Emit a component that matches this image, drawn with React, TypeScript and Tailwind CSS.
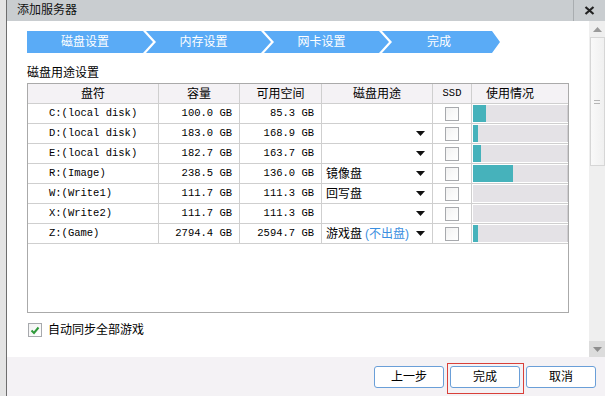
import React from 'react'

type Row = {
  drive: string
  cap: string
  free: string
  use: string
  note?: string
  drop: boolean
  bar: number
}

const ROWS: Row[] = [
  { drive: 'C:(local disk)', cap: '100.0 GB', free: '85.3 GB', use: '', drop: false, bar: 13 },
  { drive: 'D:(local disk)', cap: '183.0 GB', free: '168.9 GB', use: '', drop: true, bar: 5 },
  { drive: 'E:(local disk)', cap: '182.7 GB', free: '163.7 GB', use: '', drop: true, bar: 8 },
  { drive: 'R:(Image)', cap: '238.5 GB', free: '136.0 GB', use: '镜像盘', drop: true, bar: 40 },
  { drive: 'W:(Write1)', cap: '111.7 GB', free: '111.3 GB', use: '回写盘', drop: true, bar: 0 },
  { drive: 'X:(Write2)', cap: '111.7 GB', free: '111.3 GB', use: '', drop: true, bar: 0 },
  { drive: 'Z:(Game)', cap: '2794.4 GB', free: '2594.7 GB', use: '游戏盘', note: '(不出盘)', drop: true, bar: 5 }
]

const STEPS = ['磁盘设置', '内存设置', '网卡设置', '完成']

const mono = "font-['Liberation_Mono','Noto_Sans_CJK_SC',monospace] text-[10.5px]"

function Caret() {
  return (
    <svg width="9" height="5" viewBox="0 0 9 5" className="shrink-0">
      <polygon points="0,0 9,0 4.5,5" fill="#111" />
    </svg>
  )
}

function Box({ checked = false }: { checked?: boolean }) {
  return (
    <span className="flex h-[14px] w-[14px] items-center justify-center border border-[#a7a9ad] bg-gradient-to-br from-[#f2f2f2] to-white">
      {checked && (
        <svg width="10" height="9" viewBox="0 0 10 9">
          <path d="M1.5 4.5 L4 7 L8.5 1.5" stroke="#2f9a3a" strokeWidth="2" fill="none" />
        </svg>
      )}
    </span>
  )
}

function Steps() {
  return (
    <div className="flex h-[22px] text-[12px] leading-[22px] text-white">
      {STEPS.map((s, i) => (
        <div
          key={s}
          className={
            i === 0
              ? 'flex h-full w-[126px] items-center justify-center bg-[#5aabf6] pr-[10px] [clip-path:polygon(0_0,116px_0,100%_50%,116px_100%,0_100%)]'
              : i === 3
                ? 'ml-[-7px] flex h-full w-[118px] items-center justify-center bg-[#5aabf6] pr-[4px] [clip-path:polygon(0_0,110px_0,100%_50%,110px_100%,0_100%,10px_50%)]'
                : 'ml-[-7px] flex h-full w-[125px] items-center justify-center bg-[#5aabf6] pr-[10px] [clip-path:polygon(0_0,115px_0,100%_50%,115px_100%,0_100%,10px_50%)]'
          }
        >
          {s}
        </div>
      ))}
    </div>
  )
}

function DiskTable() {
  const cell = 'flex items-center border-r border-[#cfcfcf]'
  return (
    <div className="h-[230px] w-[542px] border border-[#aaaaaa] bg-white">
      <div className="grid grid-cols-[131px_81px_82px_111px_39px_96px] auto-rows-[20px] text-[12px] text-black">
        <div className={`${cell} justify-center border-b bg-[#f4f2f5]`}>盘符</div>
        <div className={`${cell} justify-center border-b bg-[#f4f2f5]`}>容量</div>
        <div className={`${cell} justify-center border-b bg-[#f4f2f5]`}>可用空间</div>
        <div className={`${cell} justify-center border-b bg-[#f4f2f5]`}>磁盘用途</div>
        <div className={`${cell} justify-center border-b bg-[#f4f2f5] ${mono}`}>SSD</div>
        <div className="flex items-center justify-center border-b border-[#cfcfcf] bg-[#f4f2f5] pr-[20px]">使用情况</div>
        {ROWS.map((r) => (
          <React.Fragment key={r.drive}>
            <div className={`${cell} border-b pl-[21px] ${mono}`}>{r.drive}</div>
            <div className={`${cell} justify-end border-b pr-[7px] ${mono}`}>{r.cap}</div>
            <div className={`${cell} justify-end border-b pr-[7px] ${mono}`}>{r.free}</div>
            <div className={`${cell} justify-between border-b pl-[4px] pr-[7px]`}>
              <span>
                {r.use}
                {r.note && <span className="ml-[3px] text-[#3b8fe0]">{r.note}</span>}
              </span>
              {r.drop && <Caret />}
            </div>
            <div className={`${cell} justify-center border-b`}>
              <Box />
            </div>
            <div className="flex items-center border-b border-[#cfcfcf] pl-[1px]">
              <div className="flex h-[17px] w-[95px] border-r border-[#cfcdd1] bg-[#e4e2e6]">
                <div className="h-full bg-[#46b2bb]" style={{ width: r.bar }} />
              </div>
            </div>
          </React.Fragment>
        ))}
      </div>
    </div>
  )
}

function Scrollbar() {
  return (
    <div className="flex w-[16px] flex-col items-center bg-[#efefef]">
      <svg width="9" height="5" viewBox="0 0 9 5" className="mt-[6px]">
        <polygon points="4.5,0 9,5 0,5" fill="#9a9a9a" />
      </svg>
      <div className="mt-[5px] flex h-[129px] w-[15px] items-center justify-center border border-[#d6d6d6] bg-gradient-to-r from-[#f9f9f9] to-[#f0f0f0]">
        <div className="flex flex-col gap-[2px]">
          <span className="h-px w-[6px] bg-[#b5b5b5]" />
          <span className="h-px w-[6px] bg-[#b5b5b5]" />
        </div>
      </div>
      <div className="flex-1" />
      <div className="flex h-[16px] w-full items-center justify-center bg-[#dcdcdc]">
        <svg width="9" height="5" viewBox="0 0 9 5">
          <polygon points="0,0 9,0 4.5,5" fill="#8e8e8e" />
        </svg>
      </div>
    </div>
  )
}

export default function App() {
  return (
    <div className="flex h-[396px] w-[605px] overflow-hidden bg-white font-['Liberation_Sans','Noto_Sans_CJK_SC',sans-serif] text-[12px] text-black">
      <div className="w-[7px] border-r border-[#6e6e6e] bg-[#e4e4e4]" />
      <div className="flex flex-1 flex-col">
        <div className="flex h-[21px] items-center bg-[#c9cdd0]">
          <span className="flex-1 pl-[10px] text-[12px] leading-[21px] text-[#111]">添加服务器</span>
          <div className="flex h-full w-[32px] items-center justify-center border-l border-[#a9adb0]">
            <svg width="11" height="9" viewBox="0 0 11 9">
              <path d="M1.5 1 L9.5 8 M9.5 1 L1.5 8" stroke="#222" strokeWidth="2.2" />
            </svg>
          </div>
        </div>
        <div className="flex flex-1">
          <div className="flex flex-1 flex-col pl-[20px] pt-[10px]">
            <Steps />
            <div className="mt-[12px] h-[18px] leading-[16px]">磁盘用途设置</div>
            <DiskTable />
            <label className="mt-[9px] flex items-center gap-[6px] pl-[1px]">
              <Box checked />
              <span className="leading-[16px]">自动同步全部游戏</span>
            </label>
          </div>
          <Scrollbar />
        </div>
        <div className="flex h-[39px] items-start justify-end gap-[6px] bg-[#f4f2f5] pr-[9px] pt-[9px]">
          <button className="h-[22px] w-[70px] rounded-[3px] border border-[#6a9fd8] bg-white leading-[20px]">上一步</button>
          <button className="relative h-[22px] w-[70px] rounded-[3px] border border-[#6a9fd8] bg-white leading-[20px]">
            完成
            <span className="pointer-events-none absolute bottom-[-7px] left-[-4px] right-[-5px] top-[-4px] border border-[#d9403a]" />
          </button>
          <button className="h-[22px] w-[70px] rounded-[3px] border border-[#6a9fd8] bg-white leading-[20px]">取消</button>
        </div>
      </div>
    </div>
  )
}
